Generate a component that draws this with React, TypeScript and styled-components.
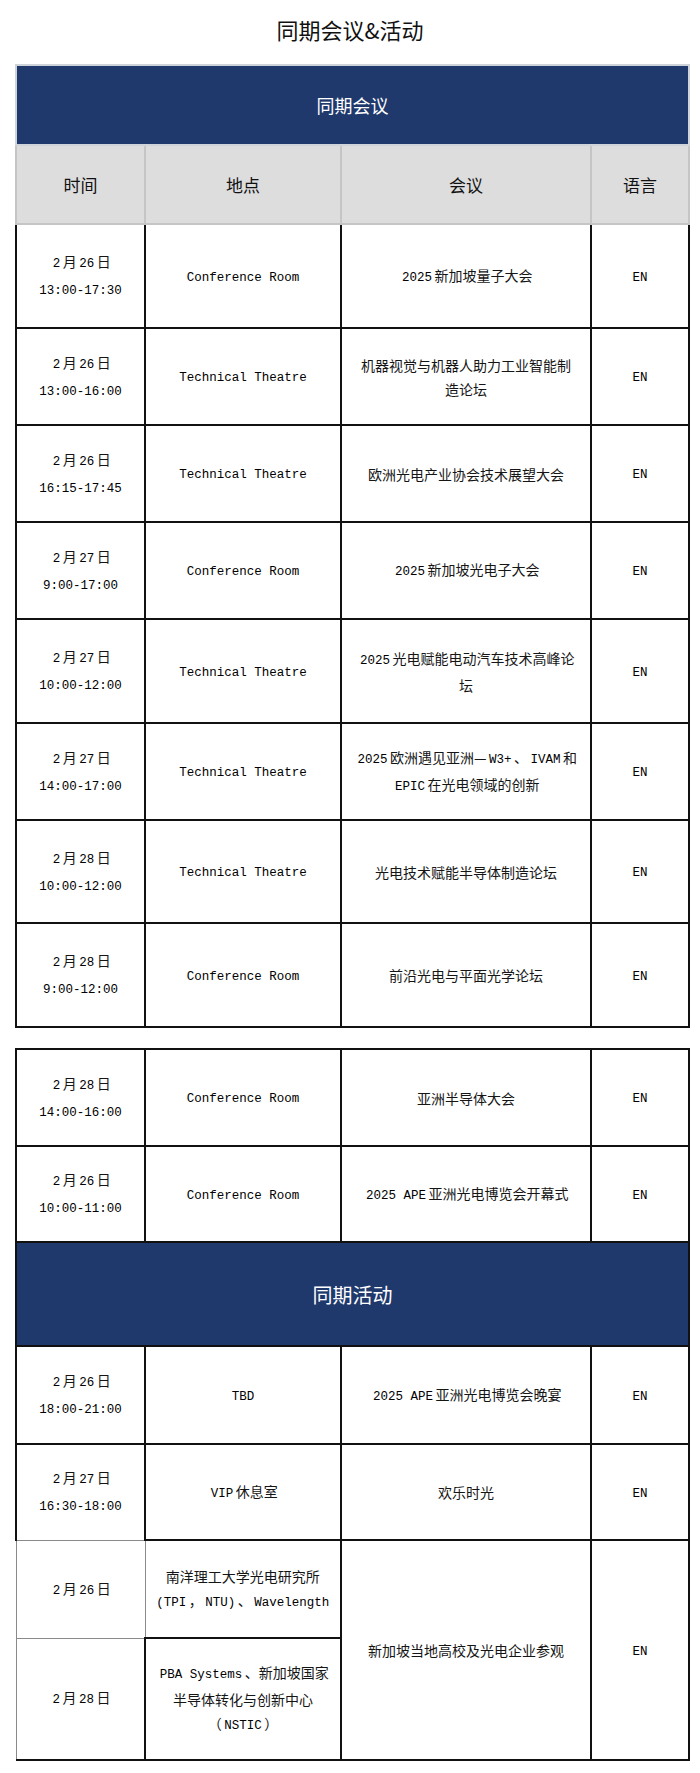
import React from 'react';
import styled, { createGlobalStyle } from 'styled-components';

type Row = {
  date: string;
  time?: string;
  place: string[];
  title: string[];
  lang: string;
  h: number;
};

const meetings: Row[] = [
  { date: '2月26日', time: '13:00-17:30', place: ['Conference Room'], title: ['2025新加坡量子大会'], lang: 'EN', h: 104 },
  { date: '2月26日', time: '13:00-16:00', place: ['Technical Theatre'], title: ['机器视觉与机器人助力工业智能制', '造论坛'], lang: 'EN', h: 97 },
  { date: '2月26日', time: '16:15-17:45', place: ['Technical Theatre'], title: ['欧洲光电产业协会技术展望大会'], lang: 'EN', h: 97 },
  { date: '2月27日', time: '9:00-17:00', place: ['Conference Room'], title: ['2025新加坡光电子大会'], lang: 'EN', h: 97 },
  { date: '2月27日', time: '10:00-12:00', place: ['Technical Theatre'], title: ['2025光电赋能电动汽车技术高峰论', '坛'], lang: 'EN', h: 104 },
  { date: '2月27日', time: '14:00-17:00', place: ['Technical Theatre'], title: ['2025欧洲遇见亚洲—W3+、IVAM和', 'EPIC在光电领域的创新'], lang: 'EN', h: 97 },
  { date: '2月28日', time: '10:00-12:00', place: ['Technical Theatre'], title: ['光电技术赋能半导体制造论坛'], lang: 'EN', h: 103 },
  { date: '2月28日', time: '9:00-12:00', place: ['Conference Room'], title: ['前沿光电与平面光学论坛'], lang: 'EN', h: 104 },
];

const moreMeetings: Row[] = [
  { date: '2月28日', time: '14:00-16:00', place: ['Conference Room'], title: ['亚洲半导体大会'], lang: 'EN', h: 97 },
  { date: '2月26日', time: '10:00-11:00', place: ['Conference Room'], title: ['2025 APE亚洲光电博览会开幕式'], lang: 'EN', h: 96 },
];

const events: Row[] = [
  { date: '2月26日', time: '18:00-21:00', place: ['TBD'], title: ['2025 APE亚洲光电博览会晚宴'], lang: 'EN', h: 98 },
  { date: '2月27日', time: '16:30-18:00', place: ['VIP休息室'], title: ['欢乐时光'], lang: 'EN', h: 96 },
];

const GlobalStyle = createGlobalStyle`
  body {
    margin: 0;
    background: #ffffff;
    font-family: "Noto Sans CJK SC", sans-serif;
    color: #151515;
  }
`;

const Page = styled.div`
  width: 700px;
  padding: 14px 0 15px;
  box-sizing: border-box;
`;

const Title = styled.h1`
  margin: 0 0 20px;
  font-size: 22px;
  line-height: 30px;
  font-weight: 400;
  text-align: center;
  color: #111;
`;

const Table = styled.table<{ $gap?: number }>`
  width: 673px;
  margin: ${(p) => p.$gap || 0}px 0 0 15px;
  border-collapse: collapse;
  table-layout: fixed;
`;

const Banner = styled.td<{ $size: number; $dark?: boolean }>`
  background: #1f396c;
  color: #ffffff;
  text-align: center;
  font-size: ${(p) => p.$size}px;
  border: 2px solid ${(p) => (p.$dark ? '#111' : '#cfd3da')};
  padding: 0;
`;

const HeadCell = styled.th`
  background: #dddddd;
  border: 2px solid #c5c5c5;
  font-size: 17px;
  font-weight: 400;
  color: #111;
  padding: 0;
`;

const Cell = styled.td<{ $soft?: boolean; $softBottom?: boolean; $softLeft?: boolean; $hardBottom?: boolean }>`
  border: 2px solid #111;
  ${(p) => p.$soft && 'border: 1px solid #8a8a8a;'}
  ${(p) => p.$softBottom && 'border-bottom: 1px solid #8a8a8a;'}
  ${(p) => p.$softLeft && 'border-left: 1px solid #8a8a8a;'}
  ${(p) => p.$hardBottom && 'border-bottom: 2px solid #111;'}
  text-align: center;
  vertical-align: middle;
  font-size: 14px;
  line-height: 24px;
  padding: 0 6px;
  color: #151515;
`;

const Latin = styled.span`
  font-family: "Liberation Mono", monospace;
  font-size: 12.5px;
  color: #000;
  margin: 0 2.5px;
`;

const Mixed = ({ lines }: { lines: string[] }) => (
  <>
    {lines.map((line, i) => (
      <React.Fragment key={i}>
        {i > 0 && <br />}
        {line.split(/([\x20-\x7E]+)/).map((part, j) =>
          /^[\x20-\x7E]+$/.test(part) ? <Latin key={j}>{part}</Latin> : part
        )}
      </React.Fragment>
    ))}
  </>
);

const Cols = () => (
  <colgroup>
    <col style={{ width: 129 }} />
    <col style={{ width: 196 }} />
    <col style={{ width: 250 }} />
    <col style={{ width: 98 }} />
  </colgroup>
);

const ScheduleRow = ({ row, softBottom }: { row: Row; softBottom?: boolean }) => (
  <tr style={{ height: row.h }}>
    <Cell $softBottom={softBottom}>
      <Mixed lines={row.time ? [row.date, row.time] : [row.date]} />
    </Cell>
    <Cell>
      <Mixed lines={row.place} />
    </Cell>
    <Cell>
      <Mixed lines={row.title} />
    </Cell>
    <Cell>
      <Mixed lines={[row.lang]} />
    </Cell>
  </tr>
);

export default function App() {
  return (
    <Page>
      <GlobalStyle />
      <Title>同期会议&amp;活动</Title>
      <Table>
        <Cols />
        <tbody>
          <tr style={{ height: 80 }}>
            <Banner colSpan={4} $size={18}>同期会议</Banner>
          </tr>
          <tr style={{ height: 79 }}>
            <HeadCell>时间</HeadCell>
            <HeadCell>地点</HeadCell>
            <HeadCell>会议</HeadCell>
            <HeadCell>语言</HeadCell>
          </tr>
          {meetings.map((row, i) => (
            <ScheduleRow key={i} row={row} />
          ))}
        </tbody>
      </Table>
      <Table $gap={20}>
        <Cols />
        <tbody>
          {moreMeetings.map((row, i) => (
            <ScheduleRow key={i} row={row} />
          ))}
          <tr style={{ height: 104 }}>
            <Banner colSpan={4} $size={20} $dark>同期活动</Banner>
          </tr>
          {events.map((row, i) => (
            <ScheduleRow key={i} row={row} softBottom={i === events.length - 1} />
          ))}
          <tr style={{ height: 98 }}>
            <Cell $soft>
              <Mixed lines={['2月26日']} />
            </Cell>
            <Cell $softLeft>
              <Mixed lines={['南洋理工大学光电研究所', '(TPI，NTU)、Wavelength']} />
            </Cell>
            <Cell rowSpan={2}>
              <Mixed lines={['新加坡当地高校及光电企业参观']} />
            </Cell>
            <Cell rowSpan={2}>
              <Mixed lines={['EN']} />
            </Cell>
          </tr>
          <tr style={{ height: 122 }}>
            <Cell $soft $hardBottom>
              <Mixed lines={['2月28日']} />
            </Cell>
            <Cell>
              <Mixed lines={['PBA Systems、新加坡国家', '半导体转化与创新中心', '（NSTIC）']} />
            </Cell>
          </tr>
        </tbody>
      </Table>
    </Page>
  );
}
